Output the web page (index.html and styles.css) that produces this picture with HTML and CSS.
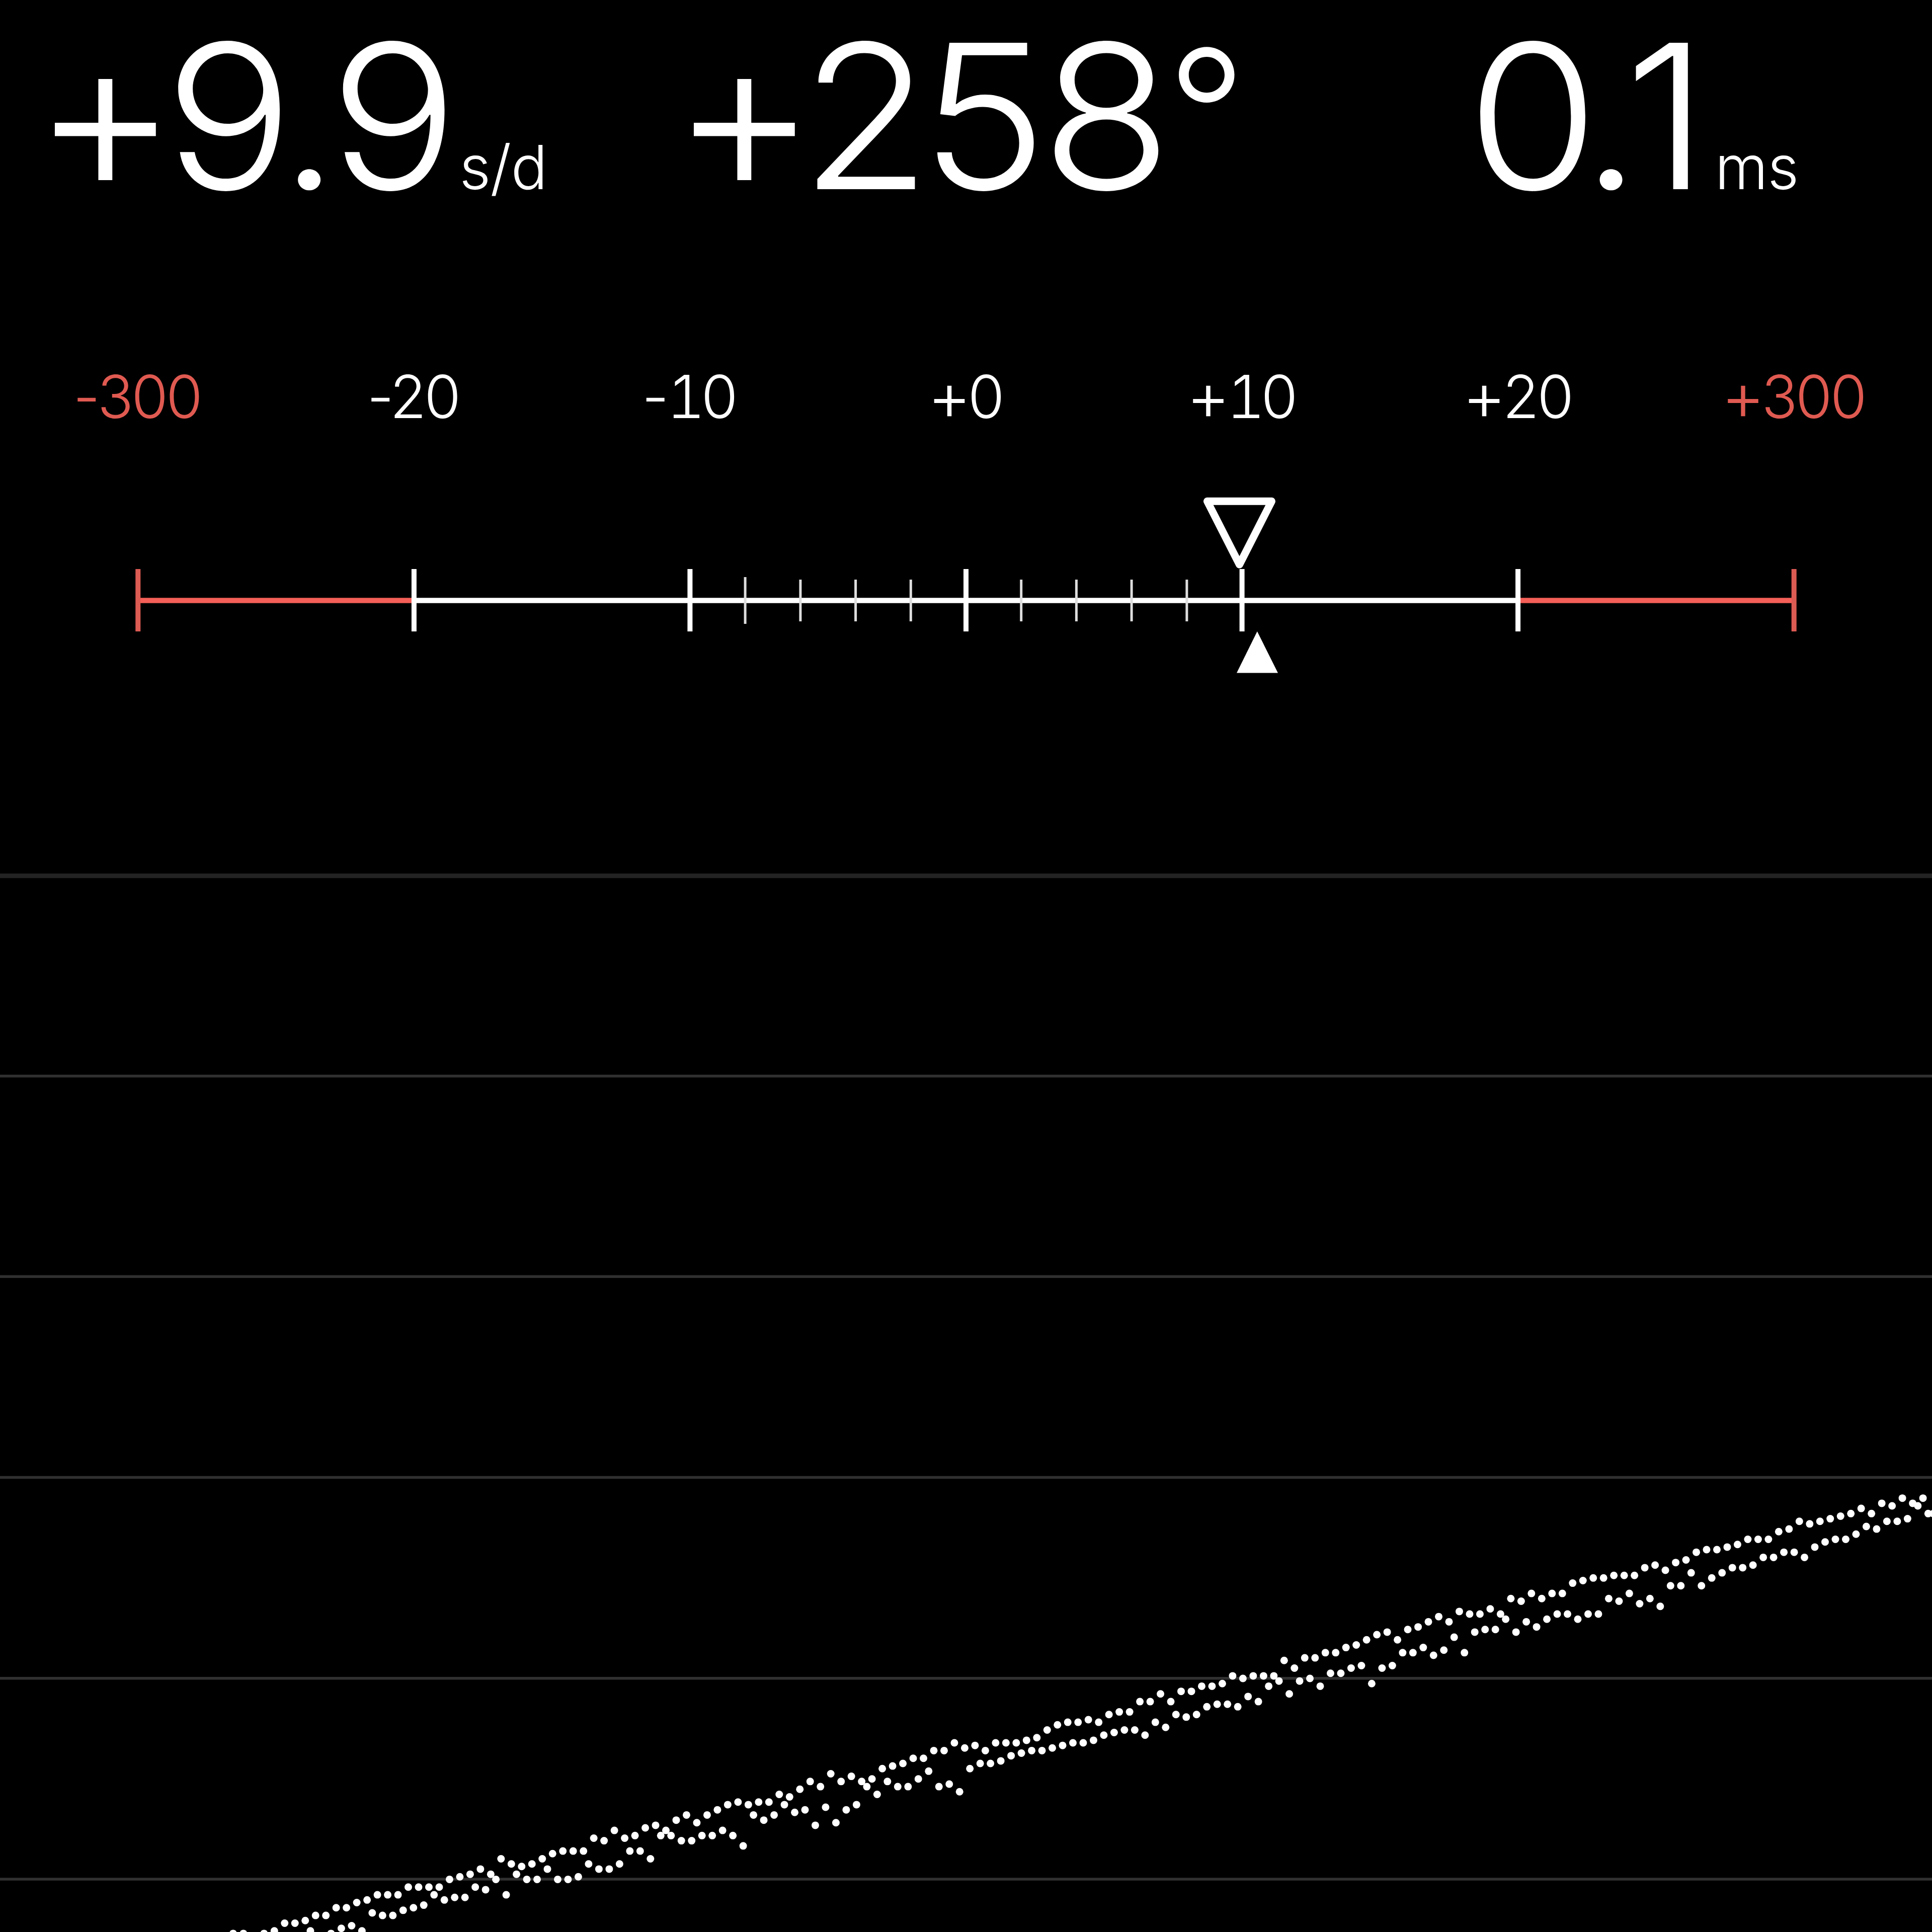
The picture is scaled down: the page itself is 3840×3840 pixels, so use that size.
FILE: index.html
```html
<!DOCTYPE html>
<html lang="en">
<head>
<meta charset="utf-8">
<title>Timegrapher</title>
<link rel="stylesheet" href="styles.css">
</head>
<body>
<main class="screen">
  <header class="readings">
    <div class="reading rate"><span class="value"><span class="sign">+</span><span class="digits"><span class="whole">9</span><span class="point">.</span>9</span></span><span class="unit">s/d</span></div>
    <div class="reading amplitude"><span class="value"><span class="sign">+</span><span class="digits"><span class="hundreds">2</span><span class="tens">5</span>8</span><span class="degree">°</span></span></div>
    <div class="reading beat"><span class="value"><span class="digits"><span class="whole">0</span><span class="point">.</span>1</span></span><span class="unit">ms</span></div>
  </header>
  <div class="labels">
    <span class="limit">-300</span><span>-20</span><span>-<i>1</i>0</span><span><b>+</b>0</span><span><b>+</b><i>1</i>0</span><span><b>+</b>20</span><span class="limit"><b>+</b>300</span>
  </div>
  <svg class="scale" viewBox="0 940 3840 440">
    <path class="rule limit-line" d="M274 1193.5H823M3017 1193.5H3566"/>
    <path class="rule" d="M823 1193.5H3017"/>
    <path class="major limit-line" d="M274.3 1131V1255M3565.7 1131V1255"/>
    <path class="major" d="M822.9 1131V1255M1371.4 1131V1255M1920 1131V1255M2468.6 1131V1255M3017.1 1131V1255"/>
    <path class="minor" d="M1481.1 1147V1240M1590.9 1152V1235M1700.6 1152V1235M1810.3 1152V1235M2029.7 1152V1235M2139.4 1152V1235M2249.1 1152V1235M2358.9 1152V1235"/>
    <path class="pointer" d="M2399.5 996.3H2527.5L2463.5 1122Z"/>
    <path class="marker" d="M2498.8 1255L2540 1337.5H2458Z"/>
  </svg>
  <svg class="trace" viewBox="0 1380 3840 2460">
    <path class="grid faint" d="M0 1740.8H3840"/>
    <path class="grid" d="M0 2138.8H3840M0 2537.2H3840M0 2936.5H3840M0 3335.8H3840M0 3735.1H3840"/>
    <g id="dots"></g>
  </svg>
</main>
<script src="trace.js"></script>
</body>
</html>
```
FILE: styles.css
```css
* { box-sizing: border-box; }
body { margin: 0; background: #000; color: #fff; font-family: Inter, "Liberation Sans", sans-serif; font-feature-settings: "calt" 0; }
.screen { width: 3840px; height: 3840px; overflow: hidden; display: flex; flex-direction: column; }
.readings { height: 640px; flex: none; display: grid; grid-template-columns: 1270px 1450px 1120px; line-height: 460px; }
.reading { white-space: nowrap; }
.rate { padding-left: 64px; }
.amplitude { padding-left: 64px; }
.beat { padding-left: 195px; }
.value { font-size: 400px; font-weight: 290; }
.digits { display: inline-block; transform: scaleX(1.065); transform-origin: left; }
.sign { position: relative; top: 8px; font-size: 445px; line-height: 0; font-weight: 270; }
.rate .digits { margin-left: -28px; }
.rate .whole { letter-spacing: -27px; }
.rate .point { letter-spacing: -19px; }
.rate .unit { margin-left: 38px; }
.amplitude .digits { margin-left: -35px; }
.hundreds { letter-spacing: -21px; }
.tens { letter-spacing: -12px; }
.degree { position: relative; top: -27px; margin-left: 35px; font-size: 348px; font-weight: 350; line-height: 0; }
.beat .whole { letter-spacing: -34px; }
.beat .point { letter-spacing: -32px; }
.beat .unit { margin-left: 42px; }
.unit { font-size: 121px; font-weight: 300; letter-spacing: -1px; }
.labels { height: 300px; flex: none; display: grid; grid-template-columns: repeat(7, 1fr); text-align: center; font-size: 118px; font-weight: 290; line-height: 296px; letter-spacing: -4px; }
.labels span { padding-right: 4px; }
.labels b { position: relative; top: 4px; font-size: 134px; font-weight: 260; line-height: 0; letter-spacing: -7px; }
.labels i { font-style: normal; font-feature-settings: "calt" 0, "tnum" 1; letter-spacing: -8px; }
.labels .limit { color: #e05a51; }
.scale { display: block; flex: none; width: 3840px; height: 440px; }
.trace { display: block; flex: none; width: 3840px; height: 2460px; }
.rule { stroke: #fff; stroke-width: 10.5; }
.major { stroke: #fff; stroke-width: 10; }
.minor { stroke: #ddd; stroke-width: 5; }
.rule.limit-line { stroke: #f45f57; }
.major.limit-line { stroke: #dc5b53; }
.pointer { fill: none; stroke: #fff; stroke-width: 15; stroke-linejoin: round; }
.marker { fill: #fff; }
.grid { stroke: #303030; stroke-width: 5.5; }
.grid.faint { stroke: #232323; stroke-width: 9; }
#dots { fill: #fff; }
```
FILE: trace.js
```js
// Beat positions in screen pixels: tick and tock samples, each four pixels apart.
const UNIT = 5.12;
const tick = [750,750,752,750,749,746,746,745,743,743,740,740,738,737,735,735,735,732,732,732,732,729,
  728,727,725,727,721,723,724,723,721,719,718,718,718,713,714,710,713,712,709,708,710,706,704,707,
  704,702,700,699,700,699,699,696,697,694,691,693,688,691,689,691,690,686,685,684,682,682,679,679,
  676,678,677,679,676,676,676,675,674,671,669,668,668,667,668,665,664,664,660,660,657,660,656,656,654,
  654,653,650,651,650,650,650,644,647,643,643,641,641,639,638,636,634,633,636,632,631,629,627,629,
  625,626,626,624,626,620,621,618,620,618,618,614,613,612,612,611,611,611,608,607,609,606,
  605,602,601,601,600,599,597,597,597,594,593,590,591,590,589,588,587,585,587,583,584,581,583,581,587];
const tock = [749,752,750,748,747,749,742,743,743,741,740,739,735,737,
  736,736,732,733,729,735,727,729,729,725,729,729,728,723,725,725,723,718,718,721,712,712,714,714,712,
  712,710,712,716,704,706,704,700,703,702,708,701,707,702,700,693,696,691,693,693,690,687,693,692,695,
  686,684,684,683,681,680,679,679,678,677,676,676,675,673,672,671,671,673,668,670,665,666,665,
  662,661,661,662,658,660,654,652,657,652,651,654,649,649,647,646,653,647,646,641,641,639,642,640,635,
  641,633,632,632,628,633,629,631,628,626,626,628,626,626,620,621,618,622,620,623,615,
  615,610,615,612,610,608,608,607,604,604,602,602,604,600,598,597,597,595,592,593,590,590,589,584,587];
const dots = document.getElementById('dots');
function plot(series, lastX) {
  series.forEach((y, i) => {
    const c = document.createElementNS('http://www.w3.org/2000/svg', 'circle');
    c.setAttribute('cx', ((lastX - 4 * (series.length - 1 - i)) * UNIT).toFixed(2));
    c.setAttribute('cy', ((y + 0.57) * UNIT).toFixed(2));
    c.setAttribute('r', 7.5);
    dots.appendChild(c);
  });
}
plot(tick, 750.5);
plot(tock, 748.5);
```
